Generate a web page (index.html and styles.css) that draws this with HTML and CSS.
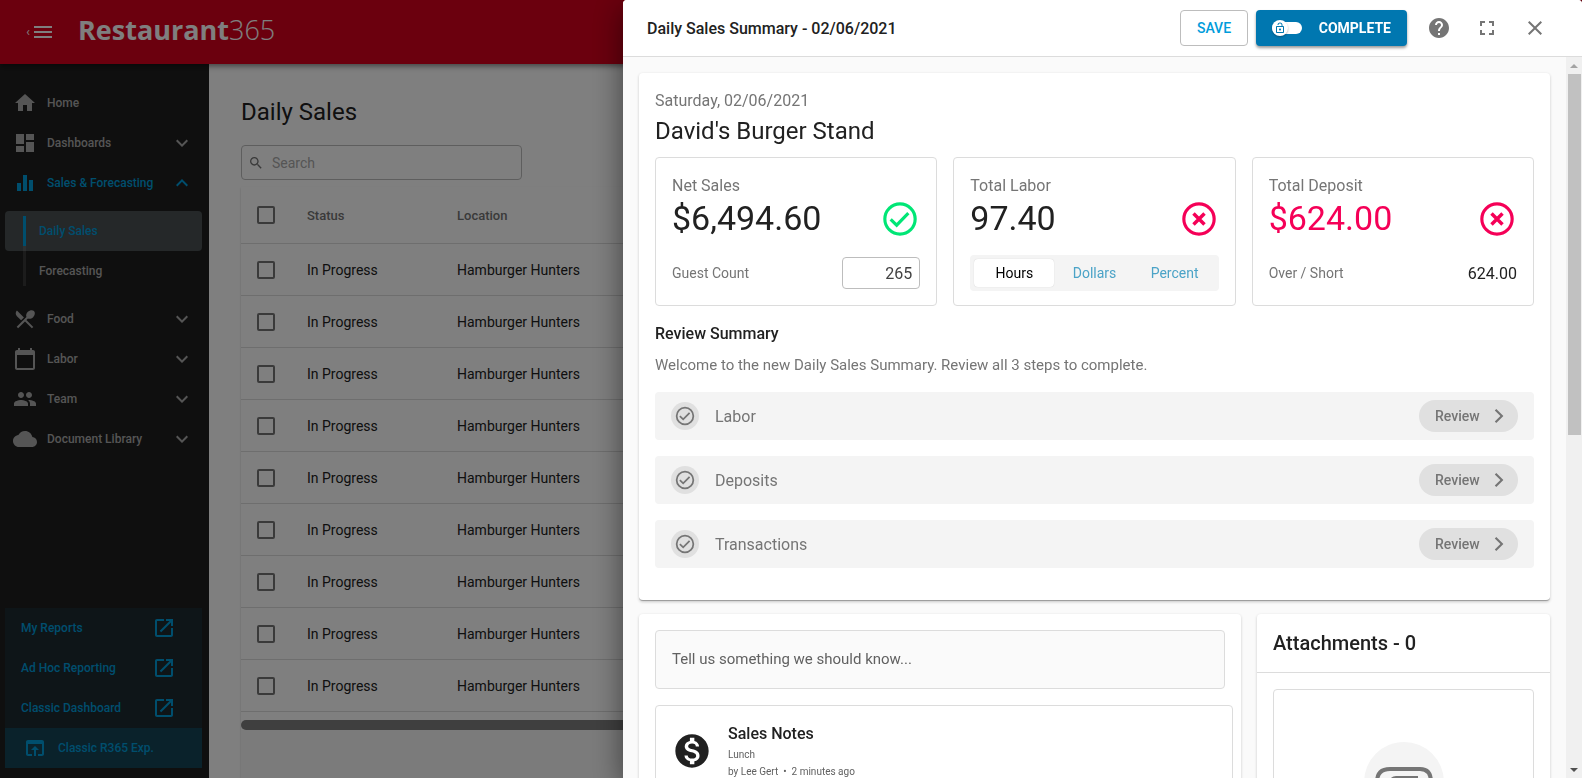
FILE: index.html
```html
<!DOCTYPE html>
<html lang="en">
<head>
    <meta charset="UTF-8">
    <meta name="viewport" content="width=device-width, initial-scale=1.0">
    <title>Daily Sales Summary - Restaurant365</title>
    <link rel="stylesheet" href="styles.css">
</head>
<body>
    <svg class="sprite" aria-hidden="true">
        <symbol id="i-menu" viewBox="0 0 24 24"><path d="M3 18h18v-2H3v2zm0-5h18v-2H3v2zm0-7v2h18V6H3z"/></symbol>
        <symbol id="i-home" viewBox="0 0 24 24"><path d="M10 20v-6h4v6h5v-8h3L12 3 2 12h3v8z"/></symbol>
        <symbol id="i-dashboard" viewBox="0 0 24 24"><path d="M3 13h8V3H3v10zm0 8h8v-6H3v6zm10 0h8V11h-8v10zm0-18v6h8V3h-8z"/></symbol>
        <symbol id="i-chart" viewBox="0 0 24 24"><path d="M4 12h4v8H4zM10 4h4v16h-4zM16 9h4v11h-4z"/></symbol>
        <symbol id="i-food" viewBox="0 0 24 24"><path d="M8.1 13.34l2.83-2.83L3.91 3.5c-1.56 1.56-1.56 4.09 0 5.66l4.19 4.18zm6.78-1.81c1.53.71 3.68.21 5.27-1.38 1.91-1.91 2.28-4.65.81-6.12-1.46-1.46-4.2-1.1-6.12.81-1.59 1.59-2.09 3.74-1.38 5.27L3.7 19.87l1.41 1.41L12 14.41l6.88 6.88 1.41-1.41L13.41 13l1.47-1.47z"/></symbol>
        <symbol id="i-calendar" viewBox="0 0 24 24"><path d="M20 3h-1V1h-2v2H7V1H5v2H4c-1.1 0-2 .9-2 2v16c0 1.1.9 2 2 2h16c1.1 0 2-.9 2-2V5c0-1.1-.9-2-2-2zm0 18H4V8h16v13z"/></symbol>
        <symbol id="i-people" viewBox="0 0 24 24"><path d="M16 11c1.66 0 2.99-1.34 2.99-3S17.66 5 16 5s-3 1.34-3 3 1.34 3 3 3zm-8 0c1.66 0 2.99-1.34 2.99-3S9.66 5 8 5 5 6.34 5 8s1.34 3 3 3zm0 2c-2.33 0-7 1.17-7 3.5V19h14v-2.5c0-2.33-4.67-3.5-7-3.5zm8 0c-.29 0-.62.02-.97.05 1.16.84 1.97 1.97 1.97 3.45V19h6v-2.5c0-2.33-4.67-3.5-7-3.5z"/></symbol>
        <symbol id="i-cloud" viewBox="0 0 24 24"><path d="M19.35 10.04C18.67 6.59 15.64 4 12 4 9.11 4 6.6 5.64 5.35 8.04 2.34 8.36 0 10.91 0 14c0 3.31 2.69 6 6 6h13c2.76 0 5-2.24 5-5 0-2.64-2.05-4.78-4.65-4.96z"/></symbol>
        <symbol id="i-down" viewBox="0 0 24 24"><path d="M7.41 8.59L12 13.17l4.59-4.58L18 10l-6 6-6-6z"/></symbol>
        <symbol id="i-up" viewBox="0 0 24 24"><path d="M12 8l-6 6 1.41 1.41L12 10.83l4.59 4.58L18 14z"/></symbol>
        <symbol id="i-right" viewBox="0 0 24 24"><path d="M7.8 6.4L9.3 4.9 16.4 12l-7.1 7.1-1.5-1.5L13.4 12z"/></symbol>
        <symbol id="i-open" viewBox="0 0 24 24"><path d="M19 19H5V5h7V3H5c-1.11 0-2 .9-2 2v14c0 1.1.89 2 2 2h14c1.1 0 2-.9 2-2v-7h-2v7zM14 3v2h3.59l-9.83 9.83 1.41 1.41L19 6.41V10h2V3h-7z"/></symbol>
        <symbol id="i-browser" viewBox="0 0 24 24"><path d="M19 4H5c-1.11 0-2 .9-2 2v12c0 1.1.89 2 2 2h4v-2H5V8h14v10h-4v2h4c1.1 0 2-.9 2-2V6c0-1.1-.89-2-2-2zm-7 6l-4 4h3v6h2v-6h3l-4-4z"/></symbol>
        <symbol id="i-search" viewBox="0 0 24 24"><path d="M15.5 14h-.79l-.28-.27C15.41 12.59 16 11.11 16 9.5 16 5.91 13.09 3 9.5 3S3 5.91 3 9.5 5.91 16 9.5 16c1.61 0 3.09-.59 4.23-1.57l.27.28v.79l5 4.99L20.49 19l-4.99-5zm-6 0C7.01 14 5 11.99 5 9.5S7.01 5 9.5 5 14 7.01 14 9.5 11.99 14 9.5 14z"/></symbol>
        <symbol id="i-help" viewBox="0 0 24 24"><path d="M12 2C6.48 2 2 6.48 2 12s4.48 10 10 10 10-4.48 10-10S17.52 2 12 2zm1 17h-2v-2h2v2zm2.07-7.75l-.9.92C13.45 12.9 13 13.5 13 15h-2v-.5c0-1.1.45-2.1 1.17-2.83l1.24-1.26c.37-.36.59-.86.59-1.41 0-1.1-.9-2-2-2s-2 .9-2 2H8c0-2.21 1.79-4 4-4s4 1.79 4 4c0 .88-.36 1.68-.93 2.25z"/></symbol>
        <symbol id="i-full" viewBox="0 0 24 24"><path d="M7 14H5v5h5v-2H7v-3zm-2-4h2V7h3V5H5v5zm12 7h-3v2h5v-5h-2v3zM14 5v2h3v3h2V5h-5z"/></symbol>
        <symbol id="i-close" viewBox="0 0 24 24"><path d="M19 6.41L17.59 5 12 10.59 6.41 5 5 6.41 10.59 12 5 17.59 6.41 19 12 13.41 17.59 19 19 17.59 13.41 12z"/></symbol>
        <symbol id="i-check" viewBox="0 0 24 24"><circle cx="12" cy="12" r="9.1" fill="none" stroke="currentColor" stroke-width="1.9"/><path d="M6.4 12.2l3.6 3.5 7-7.2" fill="none" stroke="currentColor" stroke-width="1.9"/></symbol>
        <symbol id="i-error" viewBox="0 0 24 24"><circle cx="12" cy="12" r="9.1" fill="none" stroke="currentColor" stroke-width="1.9"/><path d="M8.7 8.7l6.6 6.6M15.3 8.7l-6.6 6.6" fill="none" stroke="currentColor" stroke-width="2.1"/></symbol>
        <symbol id="i-lock" viewBox="0 0 24 24"><path d="M12 17c1.1 0 2-.9 2-2s-.9-2-2-2-2 .9-2 2 .9 2 2 2zm6-9h-1V6c0-2.76-2.24-5-5-5S7 3.24 7 6h1.9c0-1.71 1.39-3.1 3.1-3.1 1.71 0 3.1 1.39 3.1 3.1v2H6c-1.1 0-2 .9-2 2v10c0 1.1.9 2 2 2h12c1.1 0 2-.9 2-2V10c0-1.1-.9-2-2-2zm0 12H6V10h12v10z"/></symbol>
        <symbol id="i-money" viewBox="0 0 24 24"><path d="M12 2C6.48 2 2 6.48 2 12s4.48 10 10 10 10-4.48 10-10S17.52 2 12 2zm1.41 16.09V20h-2.67v-1.93c-1.71-.36-3.16-1.46-3.27-3.4h1.96c.1 1.05.82 1.87 2.65 1.87 1.96 0 2.4-.98 2.4-1.59 0-.83-.44-1.61-2.67-2.14-2.48-.6-4.18-1.62-4.18-3.67 0-1.72 1.39-2.84 3.11-3.21V4h2.67v1.95c1.86.45 2.79 1.86 2.85 3.39H14.3c-.05-1.11-.64-1.87-2.22-1.87-1.5 0-2.4.68-2.4 1.64 0 .84.65 1.39 2.67 1.91s4.18 1.39 4.18 3.91c-.01 1.83-1.38 2.83-3.12 3.16z"/></symbol>
    </svg>

    <div class="app">
        <header class="topbar">
            <button class="menu-btn" type="button" aria-label="Collapse menu">
                <span class="menu-caret">‹</span>
                <svg class="icon"><use href="#i-menu"/></svg>
            </button>
            <a class="logo" href="#">Restaurant<span>365</span></a>
        </header>

        <div class="page">
            <nav class="sidebar">
                <a class="nav-item" href="#"><svg class="icon"><use href="#i-home"/></svg><span>Home</span></a>
                <button class="nav-item" type="button"><svg class="icon"><use href="#i-dashboard"/></svg><span>Dashboards</span><svg class="icon"><use href="#i-down"/></svg></button>
                <button class="nav-item active" type="button"><svg class="icon"><use href="#i-chart"/></svg><span>Sales &amp; Forecasting</span><svg class="icon"><use href="#i-up"/></svg></button>
                <div class="submenu">
                    <a class="current" href="#">Daily Sales</a>
                    <a href="#">Forecasting</a>
                </div>
                <button class="nav-item" type="button"><svg class="icon"><use href="#i-food"/></svg><span>Food</span><svg class="icon"><use href="#i-down"/></svg></button>
                <button class="nav-item" type="button"><svg class="icon"><use href="#i-calendar"/></svg><span>Labor</span><svg class="icon"><use href="#i-down"/></svg></button>
                <button class="nav-item" type="button"><svg class="icon"><use href="#i-people"/></svg><span>Team</span><svg class="icon"><use href="#i-down"/></svg></button>
                <button class="nav-item" type="button"><svg class="icon"><use href="#i-cloud"/></svg><span>Document Library</span><svg class="icon"><use href="#i-down"/></svg></button>

                <div class="shortcuts">
                    <a href="#"><span>My Reports</span><svg class="icon"><use href="#i-open"/></svg></a>
                    <a href="#"><span>Ad Hoc Reporting</span><svg class="icon"><use href="#i-open"/></svg></a>
                    <a href="#"><span>Classic Dashboard</span><svg class="icon"><use href="#i-open"/></svg></a>
                    <a class="classic" href="#"><svg class="icon"><use href="#i-browser"/></svg><span>Classic R365 Exp.</span></a>
                </div>
            </nav>

            <main class="main">
                <h1>Daily Sales</h1>
                <label class="search">
                    <svg class="icon"><use href="#i-search"/></svg>
                    <input type="text" placeholder="Search" aria-label="Search">
                </label>
                <div class="grid-panel">
                    <div class="grid-scroll">
                        <table>
                            <thead>
                                <tr><th class="col-check"><input type="checkbox" aria-label="Select all"></th><th class="col-status">Status</th><th>Location</th></tr>
                            </thead>
                            <tbody>
                                <tr><td><input type="checkbox" aria-label="Select row 1"></td><td>In Progress</td><td>Hamburger Hunters</td></tr>
                                <tr><td><input type="checkbox" aria-label="Select row 2"></td><td>In Progress</td><td>Hamburger Hunters</td></tr>
                                <tr><td><input type="checkbox" aria-label="Select row 3"></td><td>In Progress</td><td>Hamburger Hunters</td></tr>
                                <tr><td><input type="checkbox" aria-label="Select row 4"></td><td>In Progress</td><td>Hamburger Hunters</td></tr>
                                <tr><td><input type="checkbox" aria-label="Select row 5"></td><td>In Progress</td><td>Hamburger Hunters</td></tr>
                                <tr><td><input type="checkbox" aria-label="Select row 6"></td><td>In Progress</td><td>Hamburger Hunters</td></tr>
                                <tr><td><input type="checkbox" aria-label="Select row 7"></td><td>In Progress</td><td>Hamburger Hunters</td></tr>
                                <tr><td><input type="checkbox" aria-label="Select row 8"></td><td>In Progress</td><td>Hamburger Hunters</td></tr>
                                <tr><td><input type="checkbox" aria-label="Select row 9"></td><td>In Progress</td><td>Hamburger Hunters</td></tr>
                            </tbody>
                        </table>
                        <div class="grid-bar"></div>
                    </div>
                </div>
            </main>
        </div>
    </div>

    <div class="backdrop"></div>

    <section class="drawer">
        <header class="drawer-head">
            <h2>Daily Sales Summary - 02/06/2021</h2>
            <button class="btn-save" type="button">SAVE</button>
            <button class="btn-complete" type="button">
                <span class="toggle"><span class="knob"><svg><use href="#i-lock"/></svg></span></span>
                COMPLETE
            </button>
            <div class="head-icons">
                <button type="button" aria-label="Help"><svg class="icon"><use href="#i-help"/></svg></button>
                <button type="button" aria-label="Full screen"><svg class="icon"><use href="#i-full"/></svg></button>
                <button type="button" aria-label="Close"><svg class="icon"><use href="#i-close"/></svg></button>
            </div>
        </header>

        <div class="drawer-body">
            <div class="content">
                <section class="card summary">
                    <p class="date">Saturday, 02/06/2021</p>
                    <h3 class="store">David's Burger Stand</h3>

                    <div class="stats">
                        <div class="stat">
                            <p class="stat-label">Net Sales</p>
                            <div class="stat-value"><span>$6,494.60</span><svg class="ok"><use href="#i-check"/></svg></div>
                            <div class="stat-foot">
                                <label for="guests">Guest Count</label>
                                <input id="guests" type="text" value="265">
                            </div>
                        </div>
                        <div class="stat">
                            <p class="stat-label">Total Labor</p>
                            <div class="stat-value"><span>97.40</span><svg class="bad"><use href="#i-error"/></svg></div>
                            <div class="segmented">
                                <button class="selected" type="button">Hours</button>
                                <button type="button">Dollars</button>
                                <button type="button">Percent</button>
                            </div>
                        </div>
                        <div class="stat">
                            <p class="stat-label">Total Deposit</p>
                            <div class="stat-value negative"><span>$624.00</span><svg class="bad"><use href="#i-error"/></svg></div>
                            <div class="stat-foot"><span>Over / Short</span><b>624.00</b></div>
                        </div>
                    </div>

                    <h4>Review Summary</h4>
                    <p class="intro">Welcome to the new Daily Sales Summary. Review all 3 steps to complete.</p>
                    <ul class="steps">
                        <li><span class="step-icon"><svg><use href="#i-check"/></svg></span><span class="step-name">Labor</span><button type="button">Review<svg class="icon"><use href="#i-right"/></svg></button></li>
                        <li><span class="step-icon"><svg><use href="#i-check"/></svg></span><span class="step-name">Deposits</span><button type="button">Review<svg class="icon"><use href="#i-right"/></svg></button></li>
                        <li><span class="step-icon"><svg><use href="#i-check"/></svg></span><span class="step-name">Transactions</span><button type="button">Review<svg class="icon"><use href="#i-right"/></svg></button></li>
                    </ul>
                </section>

                <div class="columns">
                    <section class="card notes">
                        <input class="note-input" type="text" placeholder="Tell us something we should know..." aria-label="New note">
                        <article class="note">
                            <svg><use href="#i-money"/></svg>
                            <div>
                                <h4>Sales Notes</h4>
                                <p>Lunch</p>
                                <p>by Lee Gert&nbsp; •&nbsp; 2 minutes ago</p>
                            </div>
                        </article>
                    </section>
                    <section class="card attachments">
                        <h3>Attachments - 0</h3>
                        <div class="dropzone">
                            <span class="clip">
                                <svg viewBox="0 0 80 80"><path d="M53 61H31C21 61 13 55 13 45V40Q13 27 26 27H56Q67 27 67 40V46H28V40Q28 36 32 36H54" fill="none" stroke="currentColor" stroke-width="4"/></svg>
                            </span>
                        </div>
                    </section>
                </div>
            </div>
            <div class="scrollbar" aria-hidden="true">
                <span class="arrow up"></span>
                <span class="thumb"></span>
                <span class="arrow down"></span>
            </div>
        </div>
    </section>
</body>
</html>
```
FILE: styles.css
```css
* {
    box-sizing: border-box;
}
body {
    margin: 0;
    height: 100vh;
    overflow: hidden;
    font-family: Roboto, "Liberation Sans", sans-serif;
    font-size: 14px;
    color: #212121;
}
h1, h2, h3, h4, p, ul {
    margin: 0;
    padding: 0;
    font-weight: 400;
}
button, input {
    font-family: inherit;
}
button {
    border: none;
    background: none;
    padding: 0;
    cursor: pointer;
}
a {
    text-decoration: none;
    color: inherit;
}
svg {
    fill: currentColor;
    flex: none;
}
.sprite {
    display: none;
}
.icon {
    width: 24px;
    height: 24px;
}

/* app shell */
.app {
    height: 100vh;
    display: flex;
    flex-direction: column;
}
.topbar {
    height: 64px;
    flex: none;
    display: flex;
    align-items: center;
    gap: 23px;
    padding-left: 25px;
    background: #d6001c;
    color: #fff;
    box-shadow: 0 2px 6px rgba(0, 0, 0, 0.5);
    z-index: 1;
}
.menu-btn {
    display: flex;
    align-items: center;
    color: #fff;
}
.menu-caret {
    width: 6px;
    font-size: 12px;
}
.logo {
    font-family: "Open Sans", sans-serif;
    font-size: 27px;
    font-weight: 700;
    line-height: 32px;
    margin-bottom: 4px;
}
.logo span {
    font-weight: 300;
}
.page {
    flex: 1;
    min-height: 0;
    display: flex;
}

/* sidebar */
.sidebar {
    width: 209px;
    flex: none;
    display: flex;
    flex-direction: column;
    padding: 19px 7px 10px 5px;
    background: #1f1f1f;
    color: #ababab;
    font-size: 12px;
    font-weight: 500;
}
.nav-item {
    height: 40px;
    display: flex;
    align-items: center;
    gap: 10px;
    padding: 0 8px;
    color: inherit;
    font-size: 12px;
    font-weight: 500;
}
.nav-item span {
    flex: 1;
    text-align: left;
}
.nav-item.active {
    color: #009cdb;
}
.submenu {
    margin: 8px 0;
}
.submenu a {
    display: flex;
    align-items: center;
    gap: 13px;
    height: 40px;
    padding-left: 18px;
    border-radius: 4px;
}
.submenu a::before {
    content: "";
    align-self: flex-start;
    width: 3px;
    height: 35px;
    background: #383838;
}
.submenu a.current {
    background: #4a5052;
    color: #009cdb;
}
.submenu a.current::before {
    align-self: flex-end;
    background: linear-gradient(#009cdb 30px, #5c6163 30px);
}
.shortcuts {
    margin-top: auto;
    background: #1d2b31;
    color: #009cdb;
}
.shortcuts a {
    height: 40px;
    display: flex;
    align-items: center;
    justify-content: space-between;
    padding: 0 26px 0 16px;
}
.shortcuts .classic {
    justify-content: flex-start;
    gap: 11px;
    padding-left: 18px;
    background: #144556;
}

/* daily sales list */
.main {
    flex: 1;
    min-width: 0;
    display: flex;
    flex-direction: column;
    padding: 32px 32px 0;
    background: #fff;
}
.main h1 {
    font-size: 24px;
    line-height: 32px;
    margin-bottom: 17px;
}
.search {
    width: 281px;
    height: 35px;
    flex: none;
    display: flex;
    align-items: center;
    gap: 6px;
    padding: 0 6px;
    border: 1px solid #bdbdbd;
    border-radius: 4px;
    color: #757575;
}
.search .icon {
    width: 16px;
    height: 16px;
}
.search input {
    width: 100%;
    padding: 0 2px;
    border: none;
    outline: none;
    background: none;
    font-size: 14px;
}
.search input::placeholder {
    color: #aaa;
}
.grid-panel {
    flex: 1;
    margin-top: 7px;
    background: #f6f6f6;
    box-shadow: 0 1px 2px rgba(0, 0, 0, 0.2);
}
.grid-scroll {
    background: #fff;
}
table {
    width: 100%;
    table-layout: fixed;
    border-collapse: separate;
    border-spacing: 0;
}
th, td {
    height: 52px;
    padding: 0;
    border-bottom: 1px solid #dcdcdc;
    text-align: left;
    font-weight: 400;
}
th {
    height: 57px;
    font-size: 13px;
    font-weight: 500;
    color: #757575;
}
.col-check {
    width: 66px;
}
.col-status {
    width: 150px;
}
table input {
    appearance: none;
    display: block;
    width: 18px;
    height: 18px;
    margin: 0 0 0 16px;
    border: 2px solid #757575;
    border-radius: 2px;
}
.grid-bar {
    height: 10px;
    margin-top: 8px;
    border-radius: 5px;
    background: #7f7f7f;
}

.backdrop {
    position: fixed;
    inset: 0;
    z-index: 2;
    background: rgba(0, 0, 0, 0.5);
}

/* summary drawer */
.drawer {
    position: fixed;
    inset: 0 0 0 623px;
    z-index: 3;
    display: flex;
    flex-direction: column;
    background: #fafafa;
    border-radius: 4px 4px 0 0;
    box-shadow: 0 8px 30px rgba(0, 0, 0, 0.5);
    overflow: hidden;
}
.drawer-head {
    height: 57px;
    flex: none;
    display: flex;
    align-items: center;
    gap: 8px;
    padding: 0 23px 0 24px;
    border-bottom: 1px solid #dcdcdc;
    background: #fff;
}
.drawer-head h2 {
    flex: 1;
    font-size: 16px;
    font-weight: 500;
}
.btn-save, .btn-complete {
    height: 36px;
    border-radius: 4px;
    font-size: 14px;
    font-weight: 500;
}
.btn-save {
    width: 68px;
    border: 1px solid #bdbdbd;
    color: #009cdb;
}
.btn-complete {
    width: 151px;
    display: flex;
    align-items: center;
    justify-content: space-between;
    padding: 0 16px;
    background: #0077b0;
    color: #fff;
    font-weight: 700;
    box-shadow: 0 2px 3px rgba(0, 0, 0, 0.4);
}
.toggle {
    display: flex;
    align-items: center;
    width: 30px;
    height: 12px;
    border-radius: 6px;
    background: #fff;
}
.knob {
    display: grid;
    place-items: center;
    width: 16px;
    height: 16px;
    flex: none;
    border-radius: 50%;
    background: #fff;
    color: #0077b0;
    box-shadow: 0 1px 2px rgba(0, 0, 0, 0.3);
}
.knob svg {
    width: 12px;
    height: 12px;
}
.head-icons {
    display: flex;
    color: #757575;
}
.head-icons button {
    width: 48px;
    height: 48px;
    display: grid;
    place-items: center;
    color: inherit;
}
.drawer-body {
    flex: 1;
    min-height: 0;
    display: flex;
}
.content {
    flex: 1;
    min-width: 0;
    display: flex;
    flex-direction: column;
    gap: 13px;
    padding: 16px;
    overflow: hidden;
}
.scrollbar {
    width: 16px;
    flex: none;
    display: flex;
    flex-direction: column;
    align-items: center;
    background: #f0f0f0;
}
.thumb {
    width: 13px;
    height: 50%;
    margin-bottom: auto;
    background: #c1c1c1;
}
.arrow {
    height: 17px;
    display: grid;
    place-items: center;
}
.arrow::before {
    content: "";
    border: 4px solid transparent;
}
.arrow.up::before {
    border-top: none;
    border-bottom-color: #a3a3a3;
}
.arrow.down::before {
    border-bottom: none;
    border-top-color: #505050;
}
.card {
    background: #fff;
    border-radius: 4px;
    box-shadow: 0 1px 3px rgba(0, 0, 0, 0.2);
}
.summary {
    flex: none;
    padding: 16px 16px 32px;
    border-bottom: 1px solid #9e9e9e;
}
.date {
    font-size: 16px;
    line-height: 24px;
    color: #757575;
}
.store {
    font-size: 24px;
    line-height: 36px;
    margin-bottom: 8px;
}
.stats {
    display: grid;
    grid-template-columns: repeat(3, 1fr);
    gap: 16px;
    margin-bottom: 16px;
}
.stat {
    padding: 16px 16px 14px;
    border: 1px solid #dcdcdc;
    border-radius: 4px;
}
.stat-label {
    font-size: 16px;
    line-height: 24px;
    color: #757575;
}
.stat-value {
    display: flex;
    justify-content: space-between;
    font-size: 34px;
    line-height: 40px;
}
.stat-value svg {
    width: 40px;
    height: 40px;
    margin-top: 1px;
}
.negative, .bad {
    color: #f50057;
}
.ok {
    color: #00e676;
}
.stat-foot {
    height: 36px;
    display: flex;
    align-items: center;
    justify-content: space-between;
    margin-top: 16px;
    color: #757575;
}
.stat-foot b {
    font-size: 16px;
    font-weight: 400;
    color: #212121;
}
.stat-foot input {
    width: 78px;
    height: 32px;
    padding: 0 7px;
    border: 1px solid #bdbdbd;
    border-radius: 4px;
    font-size: 16px;
    text-align: right;
    color: #424242;
}
.segmented {
    height: 36px;
    display: grid;
    grid-template-columns: repeat(3, 1fr);
    margin-top: 16px;
    padding: 4px;
    border-radius: 4px;
    background: #f4f4f4;
}
.segmented button {
    border-radius: 4px;
    font-size: 14px;
    color: #4ba3c7;
}
.segmented .selected {
    background: #fff;
    color: #000;
    box-shadow: 0 0 1px rgba(0, 0, 0, 0.2);
}
.summary h4 {
    font-size: 16px;
    font-weight: 500;
    line-height: 24px;
    margin-bottom: 7px;
}
.intro {
    font-size: 15px;
    line-height: 24px;
    margin-bottom: 15px;
    color: #757575;
}
.steps {
    display: grid;
    gap: 16px;
    list-style: none;
}
.steps li {
    height: 48px;
    display: flex;
    align-items: center;
    gap: 16px;
    padding: 0 16px;
    border-radius: 4px;
    background: #f4f4f4;
    color: #757575;
}
.step-icon {
    display: grid;
    place-items: center;
    width: 28px;
    height: 28px;
    border-radius: 50%;
    background: #e0e0e0;
}
.step-icon svg {
    width: 22px;
    height: 22px;
}
.step-name {
    flex: 1;
    font-size: 16px;
}
.steps button {
    width: 99px;
    height: 32px;
    display: flex;
    align-items: center;
    justify-content: space-between;
    padding: 0 7px 0 16px;
    border-radius: 16px;
    background: #e0e0e0;
    font-size: 14px;
    font-weight: 500;
    color: #757575;
}
.columns {
    flex: none;
    display: grid;
    grid-template-columns: repeat(12, 1fr);
    gap: 16px;
}
.notes {
    grid-column: span 8;
    display: flex;
    flex-direction: column;
    gap: 16px;
    padding: 16px 8px 16px 16px;
}
.note-input {
    height: 59px;
    margin-right: 8px;
    padding: 0 16px 2px;
    border: 1px solid #dcdcdc;
    border-radius: 4px;
    background: #fafafa;
    font-size: 15px;
}
.note-input::placeholder {
    color: #616161;
}
.note {
    flex: 1;
    display: flex;
    align-items: flex-start;
    gap: 16px;
    padding: 16px;
    border: 1px solid #dcdcdc;
    border-radius: 4px;
}
.note svg {
    width: 40px;
    height: 40px;
    margin-top: 9px;
}
.note h4 {
    font-size: 16px;
    font-weight: 500;
    line-height: 24px;
}
.note p {
    font-size: 10px;
    line-height: 17px;
    color: #616161;
}
.attachments {
    grid-column: span 4;
}
.attachments h3 {
    padding: 16px;
    border-bottom: 1px solid #dcdcdc;
    font-size: 20px;
    font-weight: 500;
    line-height: 26px;
}
.dropzone {
    height: 260px;
    margin: 16px;
    padding-top: 52px;
    border: 1px solid #dcdcdc;
    border-radius: 4px;
}
.clip {
    display: block;
    width: 80px;
    height: 80px;
    margin: 0 auto;
    border-radius: 50%;
    background: #f4f4f4;
    color: #757575;
}
```
